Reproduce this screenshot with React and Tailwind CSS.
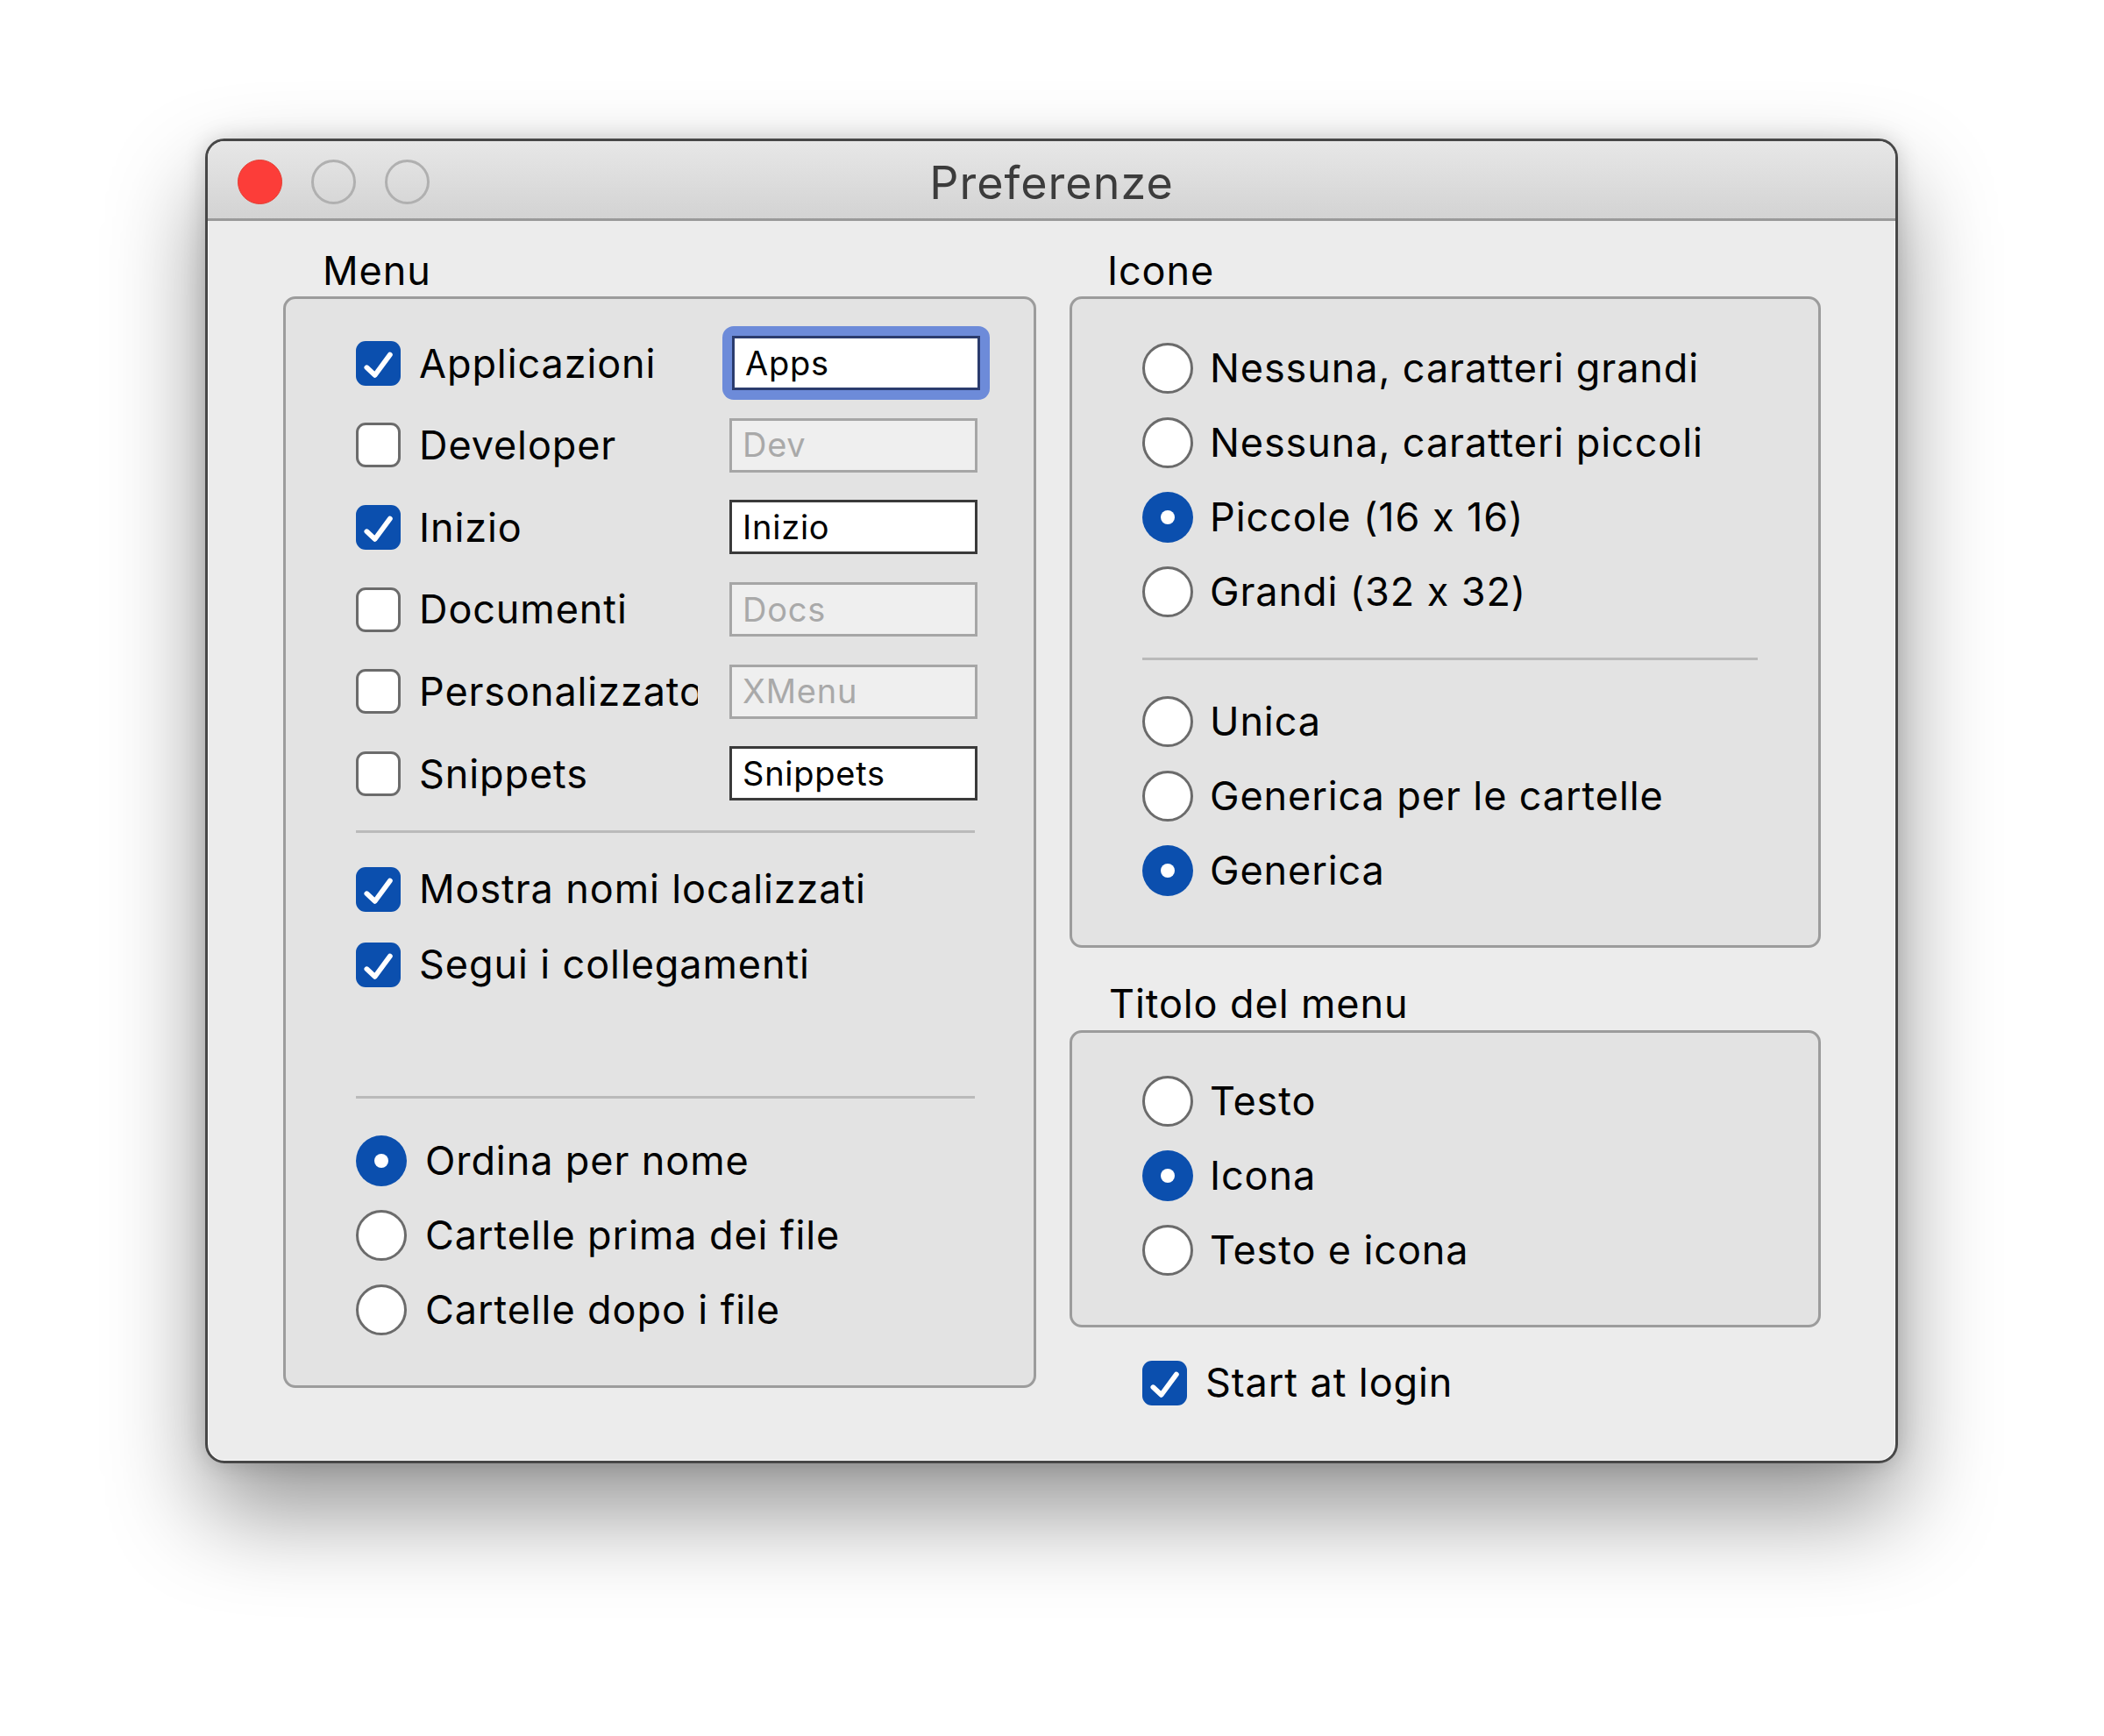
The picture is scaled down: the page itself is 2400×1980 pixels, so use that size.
import React from 'react';

function Check({ on }) {
  if (!on) {
    return <div className="w-[51px] h-[51px] shrink-0 rounded-[11px] bg-white border-[3px] border-[#6b6b6b]" />;
  }
  return (
    <div className="w-[51px] h-[51px] shrink-0 rounded-[11px] bg-[#0b4fae] flex items-center justify-center">
      <svg viewBox="0 0 24 24" className="w-[51px] h-[51px]" fill="none" stroke="white" strokeWidth="2.7" strokeLinecap="round" strokeLinejoin="round">
        <path d="M5.8 14.2l4.4 4.1 8.1-11" />
      </svg>
    </div>
  );
}

function Radio({ on }) {
  if (!on) {
    return <div className="w-[58px] h-[58px] shrink-0 rounded-full bg-white border-[3px] border-[#6b6b6b]" />;
  }
  return (
    <div className="w-[58px] h-[58px] shrink-0 rounded-full bg-[#0b4fae] flex items-center justify-center">
      <div className="w-[16px] h-[16px] rounded-full bg-white" />
    </div>
  );
}

function Field({ text, disabled, focus }) {
  const box = (
    <div
      className={`w-[283px] h-[62px] border-[3px] flex items-center pl-[12px] text-[38px] tracking-[0.02em] whitespace-nowrap ${
        disabled
          ? 'bg-[#efefef] border-[#a6a6a6] text-[#a9a9a9]'
          : focus
          ? 'bg-white border-[#2b3c6e] text-black'
          : 'bg-white border-[#3a3a3a] text-black'
      }`}
    >
      {text}
    </div>
  );
  if (focus) {
    return <div className="-m-[14px] p-[11px] rounded-[13px] bg-[#6d8bd9]">{box}</div>;
  }
  return box;
}

function CheckRow({ on, label, field }) {
  return (
    <div className="h-[93.6px] flex items-center">
      <Check on={on} />
      <div className="ml-[21px] w-[318px] overflow-hidden whitespace-nowrap text-[45px] tracking-[0.02em] text-black">{label}</div>
      <div className="ml-auto">
        <Field {...field} />
      </div>
    </div>
  );
}

function OptionRow({ on, label, gap = 'ml-[21px]' }) {
  return (
    <div className="h-[85px] flex items-center">
      <Radio on={on} />
      <span className={`${gap} text-[45px] tracking-[0.02em] text-black whitespace-nowrap`}>{label}</span>
    </div>
  );
}

function ToggleRow({ on, label }) {
  return (
    <div className="h-[86px] flex items-center">
      <Check on={on} />
      <span className="ml-[21px] text-[45px] tracking-[0.02em] text-black whitespace-nowrap">{label}</span>
    </div>
  );
}

const menuRows = [
  { on: true, label: 'Applicazioni', field: { text: 'Apps', focus: true } },
  { on: false, label: 'Developer', field: { text: 'Dev', disabled: true } },
  { on: true, label: 'Inizio', field: { text: 'Inizio' } },
  { on: false, label: 'Documenti', field: { text: 'Docs', disabled: true } },
  { on: false, label: 'Personalizzato', field: { text: 'XMenu', disabled: true } },
  { on: false, label: 'Snippets', field: { text: 'Snippets' } },
];

export default function App() {
  return (
    <div className="min-h-[1980px] bg-white pt-[158px] pl-[234px] font-[Inter,sans-serif] [font-feature-settings:'calt'_0]">
      <div className="w-[1931px] h-[1511px] rounded-[22px] border-[3px] border-[#474747] bg-[#ececec] overflow-hidden flex flex-col shadow-[0_55px_110px_rgba(0,0,0,0.42),0_0_26px_rgba(0,0,0,0.16),inset_0_0_0_1px_rgba(255,255,255,0.8)]">
        {/* title bar */}
        <div className="h-[91px] shrink-0 border-b-[3px] border-[#9a9a9a] bg-gradient-to-b from-[#e7e7e7] to-[#d3d3d3] grid grid-cols-[1fr_auto_1fr] items-center">
          <div className="flex items-center gap-[33px] pl-[34px] pt-[4px]">
            <div className="w-[51px] h-[51px] rounded-full bg-[#fc3d39] border border-[#e33e32]" />
            <div className="w-[51px] h-[51px] rounded-full border-[3px] border-[#b0b0b0]" />
            <div className="w-[51px] h-[51px] rounded-full border-[3px] border-[#b0b0b0]" />
          </div>
          <div className="text-[52px] tracking-[0.02em] text-[#3c3c3c] pt-[7px]">Preferenze</div>
          <div />
        </div>

        {/* content */}
        <div className="flex gap-[38px] pl-[86px] pt-[32px]">
          {/* left column */}
          <div className="w-[859px]">
            <div className="text-[45px] tracking-[0.02em] leading-[50px] text-black pl-[45px] mb-[4px]">Menu</div>
            <div className="rounded-[14px] border-[3px] border-[#9c9c9c] bg-[#e3e3e3] pl-[80px] pr-[64px] pt-[26.5px] pb-[43.5px]">
              {menuRows.map((r) => (
                <CheckRow key={r.label} {...r} />
              ))}
              <div className="h-[3px] bg-[#bababa] mt-[18px] mr-[3px]" />
              <div className="mt-[21px]">
                <ToggleRow on label="Mostra nomi localizzati" />
                <ToggleRow on label="Segui i collegamenti" />
              </div>
              <div className="h-[3px] bg-[#bababa] mt-[107px] mr-[3px]" />
              <div className="mt-[28.5px]">
                <OptionRow on label="Ordina per nome" gap="ml-[21px]" />
                <OptionRow label="Cartelle prima dei file" gap="ml-[21px]" />
                <OptionRow label="Cartelle dopo i file" gap="ml-[21px]" />
              </div>
            </div>
          </div>

          {/* right column */}
          <div className="w-[857px]">
            <div className="text-[45px] tracking-[0.02em] leading-[50px] text-black pl-[43px] mb-[4px]">Icone</div>
            <div className="rounded-[14px] border-[3px] border-[#9c9c9c] bg-[#e3e3e3] pl-[80px] pr-[69px] pt-[36px] pb-[43px]">
              <OptionRow label="Nessuna, caratteri grandi" gap="ml-[19px]" />
              <OptionRow label="Nessuna, caratteri piccoli" gap="ml-[19px]" />
              <OptionRow on label="Piccole (16 x 16)" gap="ml-[19px]" />
              <OptionRow label="Grandi (32 x 32)" gap="ml-[19px]" />
              <div className="h-[3px] bg-[#bababa] mt-[33px]" />
              <div className="mt-[27px]">
                <OptionRow label="Unica" gap="ml-[19px]" />
                <OptionRow label="Generica per le cartelle" gap="ml-[19px]" />
                <OptionRow on label="Generica" gap="ml-[19px]" />
              </div>
            </div>

            <div className="text-[45px] tracking-[0.02em] leading-[50px] text-black pl-[45px] mt-[39px] mb-[5px]">Titolo del menu</div>
            <div className="rounded-[14px] border-[3px] border-[#9c9c9c] bg-[#e3e3e3] pl-[80px] pt-[35px] pb-[43px]">
              <OptionRow label="Testo" gap="ml-[19px]" />
              <OptionRow on label="Icona" gap="ml-[19px]" />
              <OptionRow label="Testo e icona" gap="ml-[19px]" />
            </div>

            <div className="pl-[83px] mt-[20px]">
              <ToggleRow on label="Start at login" />
            </div>
          </div>
        </div>
      </div>
    </div>
  );
}
